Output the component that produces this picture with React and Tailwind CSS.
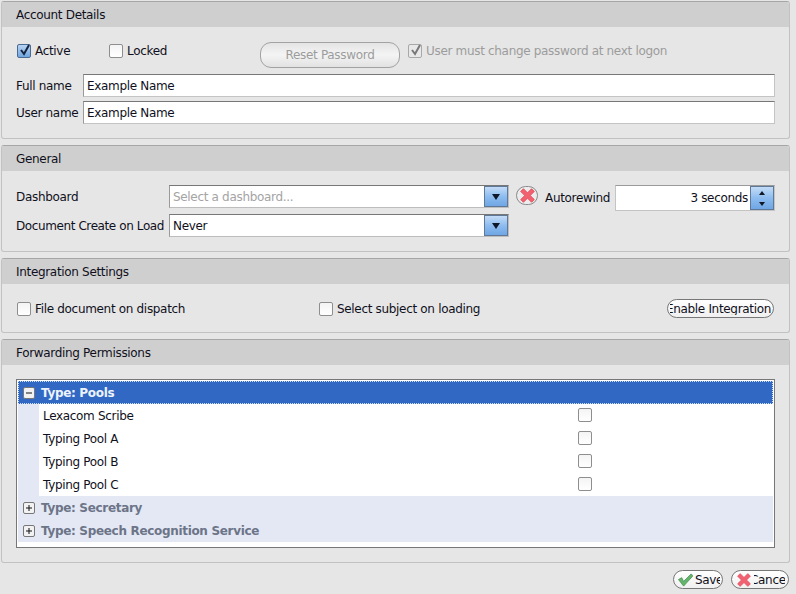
const font = { fontFamily: '"DejaVu Sans", sans-serif' };

function Panel({ title, className, children }) {
  return (
    <section className={`mx-px w-[789px] rounded-[3px] border border-[#c2c2c2] border-t-[#a6a6a6] bg-[#e6e6e6] ${className}`}>
      <h2 className="flex h-[25px] items-center rounded-t-[2px] bg-[#cfcfcf] pl-[14px] text-[12px] font-normal text-[#10101c]">{title}</h2>
      {children}
    </section>
  );
}

function Check({ checked, disabled, blue }) {
  const bg = blue ? "border-[#4a6a94] bg-gradient-to-b from-[#b8d4f2] to-[#6ea6e0]" : "border-[#8e8e8e] bg-gradient-to-b from-[#f4f4f4] to-[#ffffff]";
  return (
    <span className={`relative inline-block h-[14px] w-[14px] shrink-0 rounded-[2px] border ${disabled ? "border-[#a8a8a8] bg-[#e8e8e8]" : bg}`}>
      {checked && (
        <svg viewBox="0 0 14 14" className="absolute left-0 -top-[2px] h-[14px] w-[14px]" fill="none">
          <path d="M3 7 L6 11 L11 2" stroke={disabled ? "#777" : "#16233f"} strokeWidth="2" />
        </svg>
      )}
    </span>
  );
}

function DropBtn() {
  return (
    <span className="flex h-full w-[24px] shrink-0 items-center justify-center border border-[#5f7896] bg-gradient-to-b from-[#c4dcf6] via-[#8dbcf0] to-[#6fa6e4]">
      <span className="h-0 w-0 border-x-[4px] border-t-[6px] border-x-transparent border-t-[#101828]" />
    </span>
  );
}

function Select({ text, muted }) {
  return (
    <div className="flex h-[23px] w-[340px] items-stretch border border-[#bdbdbd] border-t-[#777] border-l-[#9a9a9a] bg-white">
      <span className={`flex-1 pl-[3px] leading-[22px] ${muted ? "text-[#a4a4a4]" : "text-[#10101c]"}`}>{text}</span>
      <DropBtn />
    </div>
  );
}

function TextInput() {
  return (
    <div className="h-[23px] flex-1 border border-[#c4c4c4] border-t-[#777] border-l-[#9a9a9a] bg-white pl-[3px] leading-[22px] text-[#10101c]">Example Name</div>
  );
}

function CloseGlyph({ size }) {
  return (
    <svg width={size} height={size} viewBox="2.5 2.5 11 11" className="relative z-10 shrink-0">
      <path d="M3 5 L5 3 L8 6 L11 3 L13 5 L10 8 L13 11 L11 13 L8 10 L5 13 L3 11 L6 8 Z" fill="#f2616f" stroke="#e0485a" strokeWidth="0.6" />
    </svg>
  );
}

function TreeHead({ open, selected, label }) {
  return (
    <div className={`flex h-[23px] items-center text-[12px] font-bold ${selected ? "bg-[#3068c4] text-[#eef3fb] outline-1 -outline-offset-1 outline-dotted outline-[#cfe0f8]" : "bg-[#e3e8f4] text-[#6c7488]"}`}>
      <span className="ml-[5px] mr-[6px] flex h-[12px] w-[12px] items-center justify-center rounded-[2px] border border-[#777] bg-[#f2f2f2]">
        <svg width="10" height="10" viewBox="0 0 10 10"><path d={open ? "M2 5 H8" : "M2 5 H8 M5 2 V8"} stroke="#111" strokeWidth="1" /></svg>
      </span>
      {label}
    </div>
  );
}

function TreeRow({ label }) {
  return (
    <div className="flex h-[23px] items-center bg-[#e3e8f4] pl-[21px]">
      <div className="flex h-full flex-1 items-center bg-white pl-[4px] text-[#10101c]">
        <span className="w-[535px]">{label}</span>
        <span className="-mt-[2px] flex"><Check /></span>
      </div>
    </div>
  );
}

export default function App() {
  return (
    <div className="h-[594px] w-[796px] overflow-hidden bg-[#e6e6e6] pt-px text-[12px] tracking-[-0.32px]" style={font}>
      <Panel title="Account Details" className="h-[138px]">
        <div className="flex h-[47px] items-start pl-[15px] pt-[15px] text-[#10101c]">
          <div className="flex w-[92px] items-center gap-[4px]"><Check checked blue />Active</div>
          <div className="flex w-[151px] items-center gap-[4px]"><Check />Locked</div>
          <button className="h-[26px] w-[140px] rounded-[11px] border border-[#a2a2a2] bg-gradient-to-b from-[#e4e4e4] via-[#f4f4f4] to-[#e2e2e2] text-[#9c9c9c]">Reset Password</button>
          <div className="ml-[8px] flex items-center gap-[4px] text-[#9c9c9c]"><Check checked disabled />User must change password at next logon</div>
        </div>
        <div className="flex flex-col gap-[4px] pl-[14px] pr-[14px]">
          <div className="flex items-center text-[#10101c]"><span className="w-[67px]">Full name</span><TextInput /></div>
          <div className="flex items-center text-[#10101c]"><span className="w-[67px]">User name</span><TextInput /></div>
        </div>
      </Panel>

      <Panel title="General" className="mt-[6px] h-[107px]">
        <div className="pl-[14px] pr-[14px] pt-[14px] text-[#10101c]">
          <div className="flex items-start">
            <span className="w-[153px] whitespace-nowrap pt-[3px]">Dashboard</span>
            <Select text="Select a dashboard..." muted />
            <span className="ml-[7px] mt-px flex h-[19px] w-[22px] items-center justify-center rounded-full border border-[#8a8a8a] bg-[#ececec]"><CloseGlyph size={15} /></span>
            <span className="ml-[7px] w-[70px] pt-[4px]">Autorewind</span>
            <div className="flex h-[26px] flex-1 border border-[#c4c4c4] border-t-[#9a9a9a] bg-white">
              <span className="flex-1 pr-[2px] text-right leading-[24px]">3 seconds</span>
              <span className="flex w-[24px] flex-col border border-[#5f7896] bg-gradient-to-b from-[#c4dcf6] via-[#8dbcf0] to-[#6fa6e4]">
                <span className="flex flex-1 items-center justify-center"><span className="h-0 w-0 border-x-[3px] border-b-[4px] border-x-transparent border-b-[#101828]" /></span>
                <span className="flex flex-1 items-center justify-center"><span className="h-0 w-0 border-x-[3px] border-t-[4px] border-x-transparent border-t-[#101828]" /></span>
              </span>
            </div>
          </div>
          <div className="mt-[3px] flex items-start">
            <span className="w-[153px] whitespace-nowrap pt-[3px] tracking-[-0.4px]">Document Create on Load</span>
            <Select text="Never" />
          </div>
        </div>
      </Panel>

      <Panel title="Integration Settings" className="mt-[6px] h-[75px]">
        <div className="flex items-center pl-[15px] pt-[15px] text-[#10101c]">
          <div className="flex w-[302px] items-center gap-[4px]"><Check />File document on dispatch</div>
          <div className="flex w-[348px] items-center gap-[4px]"><Check />Select subject on loading</div>
          <button className="flex h-[19px] w-[107px] items-center overflow-hidden rounded-[10px] border border-[#777] bg-gradient-to-b from-[#ffffff] to-[#f0f0f0] pl-[2px] text-[#10101c]">
            <span className="flex h-[13px] w-[101px] justify-end overflow-hidden whitespace-nowrap leading-[14px]"><span className="shrink-0">Enable Integration</span></span>
          </button>
        </div>
      </Panel>

      <Panel title="Forwarding Permissions" className="mt-[6px] h-[224px]">
        <div className="mx-[14px] mt-[14px] h-[169px] border border-[#777] bg-white p-px pb-[4px]">
          <TreeHead open selected label="Type: Pools" />
          <TreeRow label="Lexacom Scribe" />
          <TreeRow label="Typing Pool A" />
          <TreeRow label="Typing Pool B" />
          <TreeRow label="Typing Pool C" />
          <TreeHead label="Type: Secretary" />
          <TreeHead label="Type: Speech Recognition Service" />
        </div>
      </Panel>

      <div className="mt-[7px] flex justify-end gap-[8px] pr-[7px] text-[#10101c]">
        <button className="flex h-[19px] w-[50px] items-center overflow-hidden rounded-[10px] border border-[#777] bg-gradient-to-b from-[#ffffff] to-[#f0f0f0] pl-[4px]">
          <svg width="15" height="14" viewBox="1 1.5 16 14" className="shrink-0"><path d="M1.5 8 L5 6 L7 10 L15 2 L17 4 L7 15 Z" fill="#64b46c" stroke="#3f8f4c" strokeWidth="0.8" /></svg>
          <span className="ml-[2px] block w-[25px] overflow-hidden whitespace-nowrap text-left">Save</span>
        </button>
        <button className="flex h-[19px] w-[58px] items-center overflow-hidden rounded-[10px] border border-[#777] bg-gradient-to-b from-[#ffffff] to-[#f0f0f0] pl-[5px]">
          <CloseGlyph size={14} />
          <span className="ml-[3px] block w-[31px] overflow-hidden whitespace-nowrap text-left"><span className="-ml-[4px] inline-block">Cancel</span></span>
        </button>
      </div>
    </div>
  );
}
